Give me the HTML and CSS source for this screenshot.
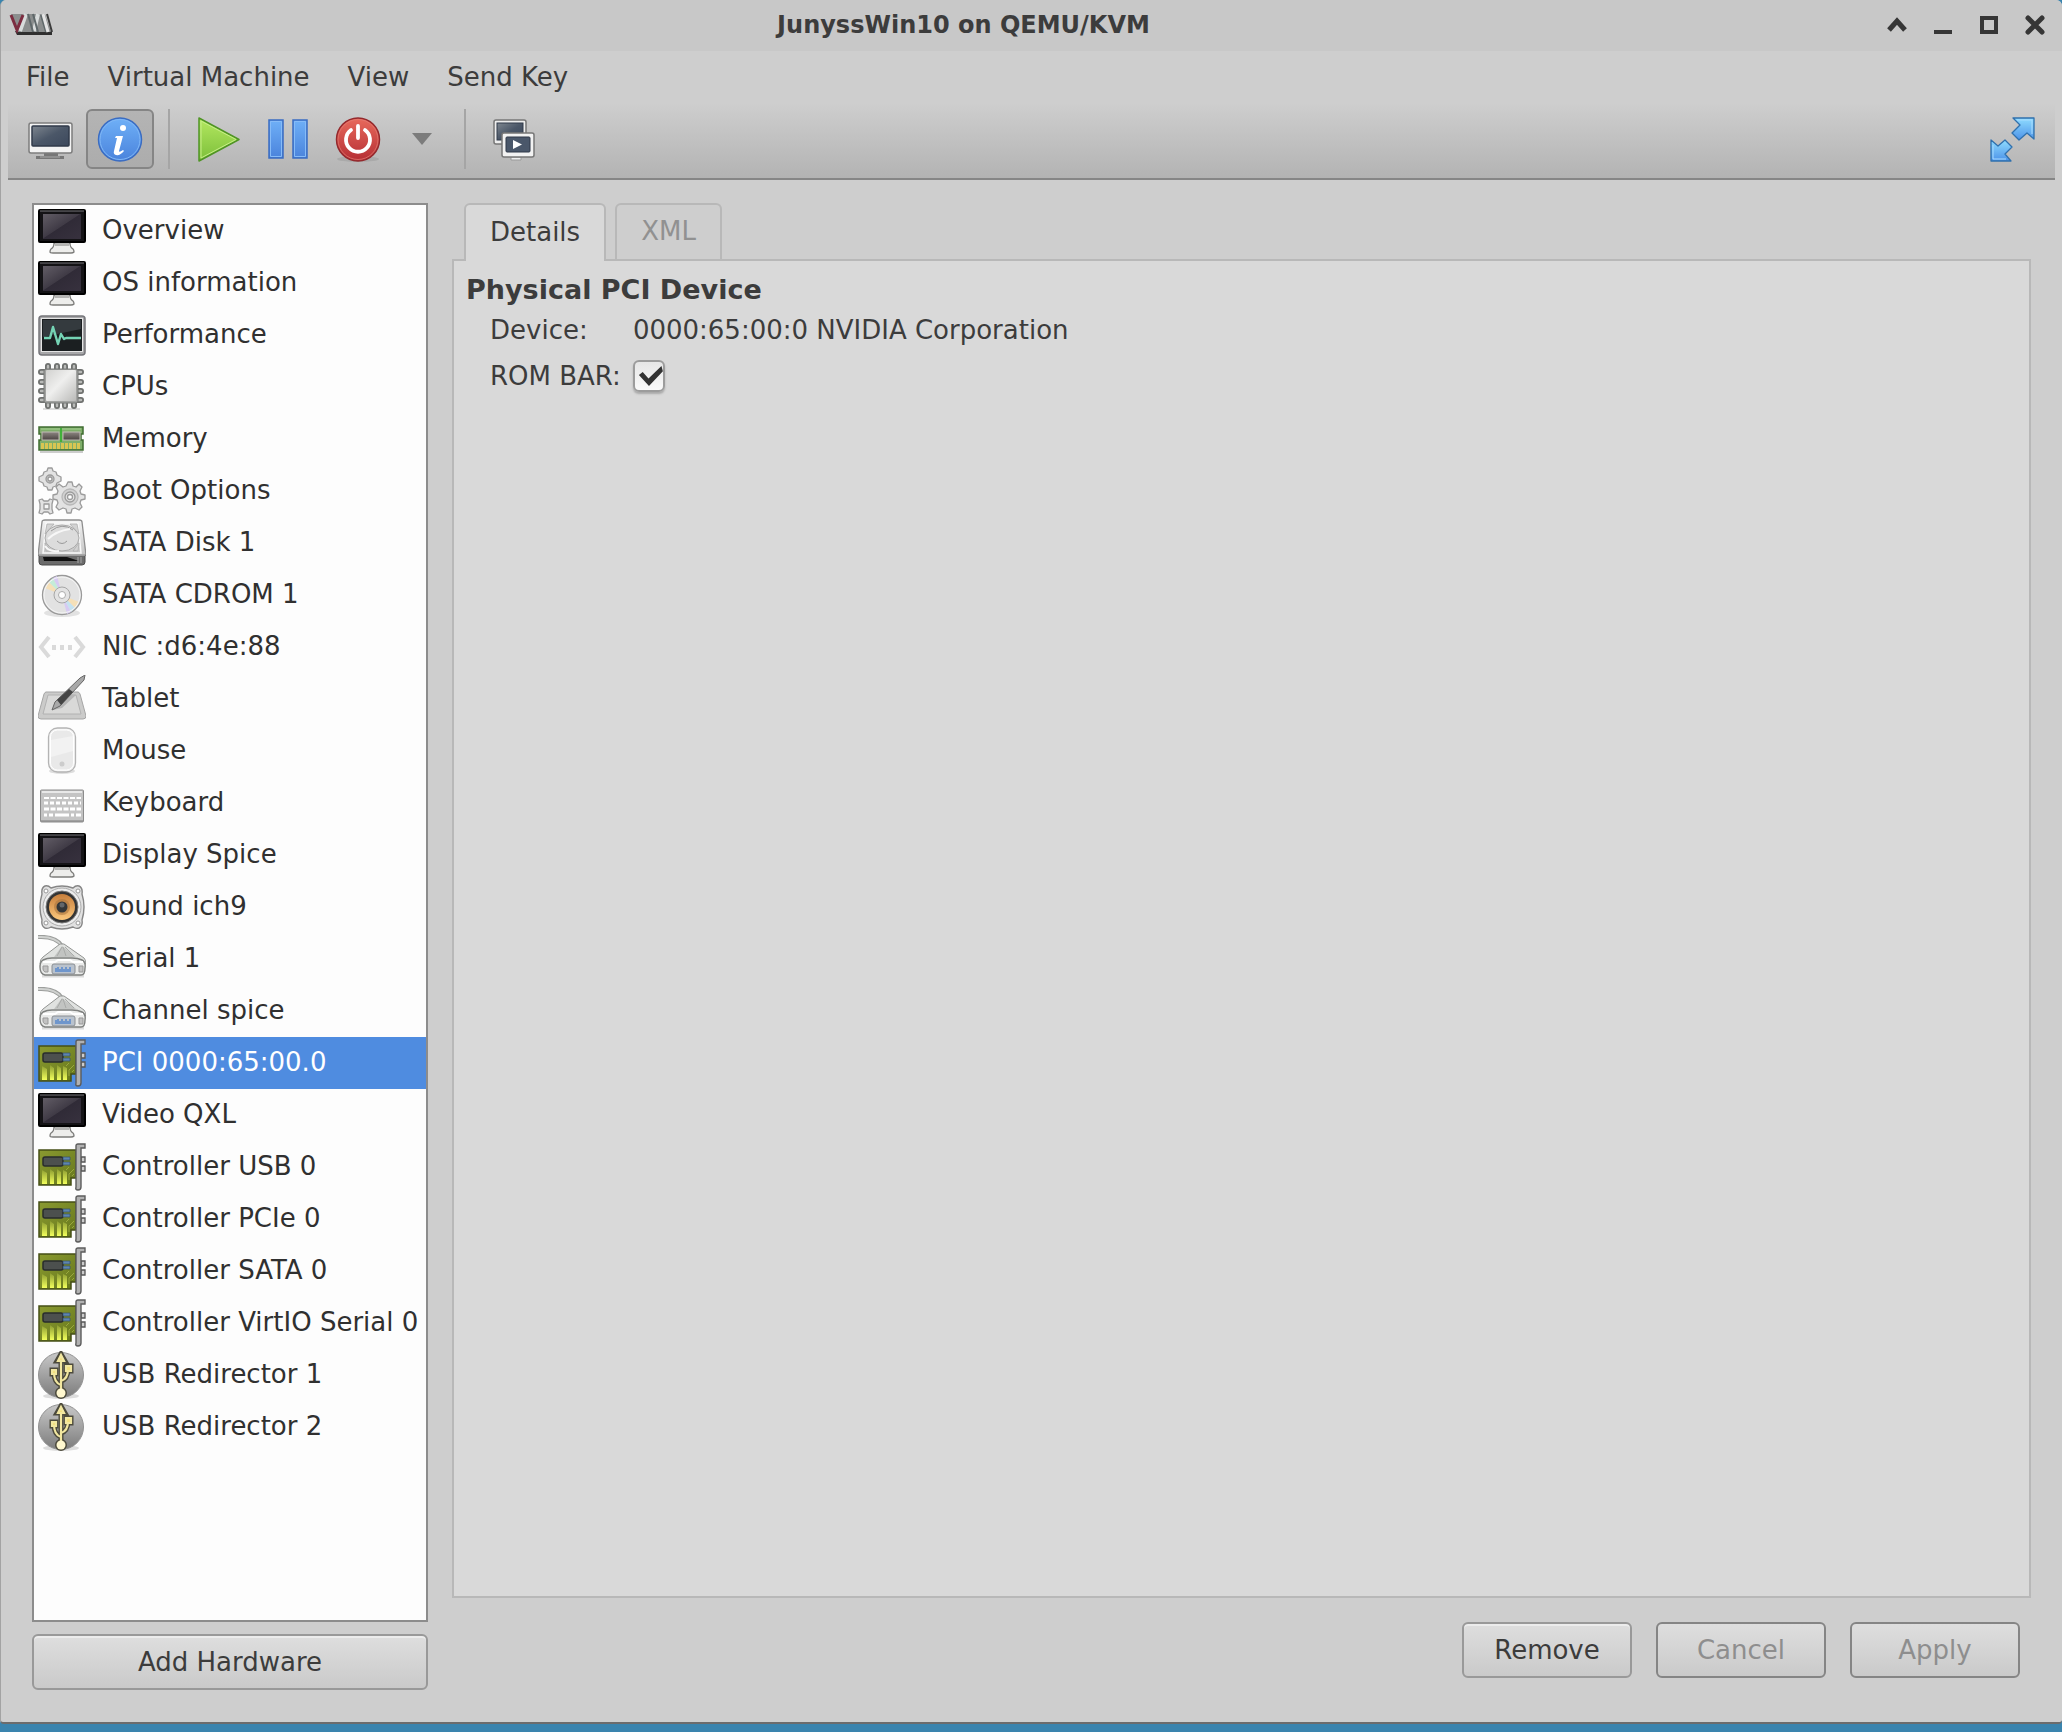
FILE: index.html
```html
<!DOCTYPE html>
<html lang="en">
<head>
    <meta charset="UTF-8">
    <title>JunyssWin10 on QEMU/KVM</title>
    <meta name="viewport" content="width=device-width, initial-scale=1.0">
    <link rel="stylesheet" href="styles.css">
</head>
<body>
    <!-- icon sprite -->
    <svg class="sprite" width="0" height="0" aria-hidden="true">
        <defs>
            <linearGradient id="g-screen" x1="0" y1="0" x2="1" y2="1">
                <stop offset="0" stop-color="#625d66"/><stop offset=".48" stop-color="#403b46"/>
                <stop offset=".5" stop-color="#302b37"/><stop offset="1" stop-color="#37313e"/>
            </linearGradient>
            <linearGradient id="g-navy" x1="0" y1="0" x2="1" y2="1">
                <stop offset="0" stop-color="#7e868f"/><stop offset=".5" stop-color="#4b5768"/><stop offset="1" stop-color="#3c485c"/>
            </linearGradient>
            <linearGradient id="g-metal" x1="0" y1="0" x2="0" y2="1">
                <stop offset="0" stop-color="#f4f4f4"/><stop offset="1" stop-color="#c4c4c4"/>
            </linearGradient>
            <linearGradient id="g-grey" x1="0" y1="0" x2="0" y2="1">
                <stop offset="0" stop-color="#c8c8c8"/><stop offset="1" stop-color="#7c7c7c"/>
            </linearGradient>
            <linearGradient id="g-chip" x1="0" y1="0" x2="1" y2="1">
                <stop offset="0" stop-color="#d2d2d0"/><stop offset=".45" stop-color="#efefee"/><stop offset="1" stop-color="#babab8"/>
            </linearGradient>
            <linearGradient id="g-ram" x1="0" y1="0" x2="0" y2="1">
                <stop offset="0" stop-color="#8d8782"/><stop offset="1" stop-color="#4a4341"/>
            </linearGradient>
            <linearGradient id="g-blue" x1="0" y1="0" x2="0" y2="1">
                <stop offset="0" stop-color="#6fb0f7"/><stop offset="1" stop-color="#4a83dc"/>
            </linearGradient>
            <linearGradient id="g-sky" x1="0" y1="0" x2="0" y2="1">
                <stop offset="0" stop-color="#8fdcff"/><stop offset="1" stop-color="#4c92e8"/>
            </linearGradient>
            <linearGradient id="g-green" x1="0" y1="0" x2="0" y2="1">
                <stop offset="0" stop-color="#b4e860"/><stop offset="1" stop-color="#7cbf3a"/>
            </linearGradient>
            <linearGradient id="g-red" x1="0" y1="0" x2="0" y2="1">
                <stop offset="0" stop-color="#e86a5c"/><stop offset="1" stop-color="#b52e34"/>
            </linearGradient>
            <linearGradient id="g-orange" x1="0" y1="0" x2="0" y2="1">
                <stop offset="0" stop-color="#c87f3c"/><stop offset="1" stop-color="#fbc77c"/>
            </linearGradient>
            <linearGradient id="g-board" x1="0" y1="0" x2="1" y2="1">
                <stop offset="0" stop-color="#8a9a30"/><stop offset="1" stop-color="#66771c"/>
            </linearGradient>
            <linearGradient id="g-pins" x1="0" y1="0" x2="0" y2="1">
                <stop offset="0" stop-color="#8a9a30"/><stop offset="1" stop-color="#f2ff5c"/>
            </linearGradient>
        </defs>

        <symbol id="monitor" viewBox="0 0 48 48">
            <path d="M16 36h16c0 4 1 5 3 6q1 1 1 3-1 1-3 1H15q-3 0-3-1 0-2 1-3c2-1 3-2 3-6z" fill="#ededeb" stroke="#7c7c7a" stroke-width="1.3"/>
            <path d="M17 36h14v3H17z" fill="#b5b5b3"/>
            <rect x="1" y="3" width="46" height="32" rx="1" fill="#141316" stroke="#000" stroke-width="2"/>
            <path d="M2 4h44" stroke="#77777a"/>
            <rect x="5" y="7" width="38" height="25" fill="url(#g-screen)"/>
        </symbol>
        <symbol id="performance" viewBox="0 0 48 48">
            <rect x="1" y="5" width="46" height="39" rx="3" fill="#a8a8aa" stroke="#75757a" stroke-width="1.5"/>
            <rect x="3" y="7" width="42" height="34" fill="#e4e4e4"/>
            <rect x="4" y="8" width="40" height="32" fill="#1b1f21"/>
            <path d="M5 9h38v9L5 26z" fill="#343a3e"/>
            <path d="M6 27h6l3-11 5 17 3-10 3 5 2-1h15" fill="none" stroke="#74d3b4" stroke-width="2.4" stroke-linejoin="round"/>
        </symbol>
        <symbol id="cpu" viewBox="0 0 48 48">
            <path d="M5 46h37" stroke="#ddd" stroke-width="2"/>
            <g stroke="#6f716f" stroke-width="6" stroke-linecap="round">
                <path d="M10 3v40M19 3v40M27 3v40M36 3v40M3 9h40M3 19h40M3 28h40M3 37h40"/>
            </g>
            <g stroke="#b9bab8" stroke-width="2.4" stroke-linecap="round">
                <path d="M10 3v40M19 3v40M27 3v40M36 3v40M3 9h40M3 19h40M3 28h40M3 37h40"/>
            </g>
            <rect x="6" y="6" width="34" height="34" rx="2" fill="#a2a3a1" stroke="#777876"/>
            <rect x="8" y="7" width="30" height="31" rx="1" fill="url(#g-chip)"/>
        </symbol>
        <symbol id="memory" viewBox="0 0 48 48">
            <path d="M2 37h43" stroke="#ccc" stroke-width="2"/>
            <path d="M1 12h44v7h-2v6h2v10H1V25h2v-6H1z" fill="#7fae6a" stroke="#3f6c30" stroke-width="1.5"/>
            <path d="M3 14h40" stroke="#a4cf90"/>
            <rect x="4" y="17" width="17" height="8" fill="url(#g-ram)" stroke="#beb9b2"/>
            <rect x="25" y="17" width="17" height="8" fill="url(#g-ram)" stroke="#beb9b2"/>
            <path d="M3 31h40" stroke="#d8c552" stroke-width="6" stroke-dasharray="3 1"/>
            <path d="M23 13v14" stroke="#42b03a" stroke-width="2"/>
        </symbol>
        <symbol id="gears" viewBox="0 0 48 48">
            <g fill="#e2e2e2" stroke="#9b9b9b" stroke-width="1.3" stroke-linejoin="round">
                <path d="M10 1h4l1 3 3 1 1 3 4 2v4l-4 2-1 3-3 1-1 3h-4l-1-3-3-1-1-3-4-2v-4l4-2 1-3 3-1z"/>
                <circle cx="12" cy="12" r="4" fill="#c8c8c8"/><circle cx="12" cy="12" r="2" fill="#fff"/>
                <path d="M30 15h4l1 4 3 1 3-3 3 3-2 4 1 3 4 1v4l-4 1-1 3 2 4-3 3-4-2-3 1-1 4h-4l-1-4-3-1-4 2-3-3 2-4-1-3-4-1v-4l4-1 1-3-2-4 3-3 4 3 3-1z"/>
                <circle cx="32" cy="30" r="8" fill="#d2d2d2" stroke="#b8b8b8"/><circle cx="32" cy="30" r="5"/><circle cx="32" cy="30" r="2.5" fill="#fff"/>
                <path d="M1 33l3-1 2 2h4l2-2 3 1-1 4v5l1 4-3 1-2-2H6l-2 2-3-1 1-4v-5z"/>
                <rect x="6" y="37" width="5" height="5" fill="#f6f6f6"/>
            </g>
        </symbol>
        <symbol id="disk" viewBox="0 0 48 48">
            <path d="M7 1h34q3 0 3 2l4 33H0L4 3q0-2 3-2z" fill="url(#g-metal)" stroke="#8e8e8e" stroke-width="1.3"/>
            <path d="M8 4h32l3 30H5z" fill="none" stroke="#f8f8f8" stroke-width="1.5"/>
            <path d="M9 5h7L7 15zM39 5h-7l9 10zM8 32l-1-8 6 8zM40 32l1-8-6 8z" fill="#d3d3d3" stroke="#aaa" stroke-width=".7"/>
            <ellipse cx="24" cy="19" rx="17" ry="13" fill="#dcdcdc" stroke="#aaa"/>
            <path d="M13 12q11-9 22-1M19 22q5 5 10 0" fill="none" stroke="#999"/>
            <path d="M10 20q8-8 22-10M7 27q4 6 14 5" fill="none" stroke="#f7f7f7" stroke-width="2"/>
            <path d="M1 36h46v7q0 3-3 3H4q-3 0-3-3z" fill="#6b6b6b" stroke="#4c4c4c"/>
            <path d="M5 38h24l12 4H6z" fill="#111"/><path d="M1 36h46" stroke="#ddd"/>
            <path d="M40 38v6M43 38v6" stroke="#a8a8a8"/>
        </symbol>
        <symbol id="cdrom" viewBox="0 0 48 48">
            <ellipse cx="24" cy="42" rx="18" ry="4" fill="#e2e2e2"/>
            <circle cx="24" cy="24" r="19.5" fill="#e2e2e2" stroke="#999" stroke-width="1.3"/>
            <path d="M24 24L7 17l4-6z" fill="#f5e0b8"/><path d="M24 24L11 11l4-4z" fill="#c4ecd8"/><path d="M24 24L15 7l4-2z" fill="#d6caf2"/>
            <path d="M24 24l17 7-4 6z" fill="#f5e0b8"/><path d="M24 24l13 13-4 4z" fill="#c4e2f0"/><path d="M24 24l9 17-4 2z" fill="#d6caf2"/>
            <circle cx="24" cy="24" r="18" fill="none" stroke="#f6f6f6"/>
            <circle cx="24" cy="24" r="8" fill="#e3e3e3" stroke="#a6a6a6"/>
            <circle cx="24" cy="24" r="3.5" fill="#fff" stroke="#acacac"/>
        </symbol>
        <symbol id="nic" viewBox="0 0 48 48">
            <path d="M11 14L3 24l8 10M37 14l8 10-8 10" fill="none" stroke="#dadada" stroke-width="4"/>
            <path d="M14 22h4v5h-4zM22 22h4v5h-4zM30 22h4v5h-4z" fill="#dadada"/>
        </symbol>
        <symbol id="tablet" viewBox="0 0 48 48">
            <path d="M8 17h32q1 0 2 2l6 22q0 3-3 3H3q-3 0-3-3l6-22q1-2 2-2z" fill="#cbcbca" stroke="#a5a5a5"/>
            <path d="M10 20h28l5 19H5z" fill="#d9d9d8" stroke="#b2b2b2"/>
            <path d="M15 35l9-2L38 20l-8-1z" fill="#b5b5b5"/>
            <path d="M14 35l3-8L42 3l5-3-1 5-24 26z" fill="#a9a9a9" stroke="#666"/>
            <path d="M19 25L31 14l4 3-12 13z" fill="#444"/>
        </symbol>
        <symbol id="mouse" viewBox="0 0 48 48">
            <ellipse cx="24" cy="44" rx="13" ry="3" fill="#ddd"/>
            <rect x="10.5" y="1" width="27" height="44" rx="9" fill="#f4f4f4" stroke="#b4b4b4" stroke-width="1.3"/>
            <rect x="12.5" y="3" width="23" height="40" rx="7" fill="#e9e9e9" stroke="#fff"/>
            <path d="M13 13l22-4v15L13 30z" fill="#f2f2f2"/>
            <circle cx="24" cy="37" r="2.5" fill="#ccc"/>
        </symbol>
        <symbol id="keyboard" viewBox="0 0 48 48">
            <rect x="2.5" y="11" width="43" height="32" rx="1" fill="#c4c4c4" stroke="#8c8c8c"/>
            <path d="M4 13h40" stroke="#e8e8e8" stroke-width="2"/>
            <path d="M6 19h37" stroke="#fff" stroke-width="2" stroke-dasharray="5 1.5"/>
            <path d="M6 24h37" stroke="#fff" stroke-width="3" stroke-dasharray="4 2"/>
            <path d="M6 30h37" stroke="#fff" stroke-width="3" stroke-dasharray="5 1.5"/>
            <path d="M6 36h3m2 0h4m2 0h14m2 0h3m2 0h5" stroke="#fff" stroke-width="3"/>
            <path d="M3 42h42" stroke="#7c7c7c"/>
        </symbol>
        <symbol id="sound" viewBox="0 0 48 48">
            <path d="M7 3q3-1 6 2 11-4 22 0 3-3 6-2 4 2 3 8 4 13 0 26 1 6-3 8-3 1-6-1-11 4-22 0-3 2-6 1-4-2-3-8-4-13 0-26-1-6 3-8z" fill="#e1e1e1" stroke="#868686" stroke-width="1.4"/>
            <g fill="#fff" stroke="#999"><circle cx="8" cy="8" r="2"/><circle cx="40" cy="8" r="2"/><circle cx="8" cy="40" r="2"/><circle cx="40" cy="40" r="2"/></g>
            <circle cx="24" cy="24" r="19" fill="#ededed" stroke="#aaa"/>
            <circle cx="24" cy="24" r="16" fill="#343434" stroke="#777"/>
            <circle cx="24" cy="24" r="13" fill="url(#g-orange)"/>
            <circle cx="24" cy="24" r="8" fill="#a87440" opacity=".6"/>
            <circle cx="24" cy="24" r="5.5" fill="#343638"/><circle cx="24" cy="22" r="2.5" fill="#62666a"/>
        </symbol>
        <symbol id="serial" viewBox="0 0 48 48">
            <path d="M4 41h42" stroke="#dcdcdc" stroke-width="3"/>
            <path d="M0 2q18-1 24 9" fill="none" stroke="#9c9e9c" stroke-width="4"/>
            <path d="M0 2q18-1 24 9" fill="none" stroke="#d0d2d0" stroke-width="2"/>
            <path d="M22 9h4l20 14q2 2 2 6H2q0-5 3-7z" fill="#e0e2e0" stroke="#939593"/>
            <path d="M24 11l-8 11h22z" fill="#c2c4c2"/>
            <path d="M24 12l-5 9M25 12l3 9M27 12l9 9" stroke="#a9aba9"/>
            <path d="M5 25q4-2 9-2h20q6 0 10 2 4 2 3 8 0 7-4 7H7q-5-1-5-8 0-5 3-7z" fill="#e9eae9" stroke="#7f817f" stroke-width="1.4"/>
            <path d="M5 27h12l3-2h12l3 2h10" fill="none" stroke="#fff" stroke-width="2"/>
            <rect x="14" y="29" width="23" height="10" rx="2" fill="#b9c2cd" stroke="#8a8e92"/>
            <path d="M17 37v-4h2v-1h2v2h2v-2h2v2h2v-2h2v2h2v-2h2v5z" fill="#6f96cc"/>
            <path d="M5 31h5v6H7q-2-1-2-3zM41 31h4v6h-4z" fill="#c2c2c2" stroke="#999"/>
        </symbol>
        <symbol id="pci" viewBox="0 0 48 48">
            <path d="M1 7h37v28h-5v7H1z" fill="url(#g-board)" stroke="#454f16" stroke-width="1.5"/>
            <path d="M36 26l-5 5v6M36 31l-2 2M28 27l3-3" fill="none" stroke="#9aa83e"/>
            <path d="M4 27l5 3v11H4zM12 26l4 3v12h-4zM19 26l4 3v12h-4zM25 27l4 2v12h-4z" fill="url(#g-pins)"/>
            <rect x="5" y="14" width="20" height="9" rx="2" fill="#4c504e" stroke="#292c2d" stroke-width="1.5"/>
            <path d="M25 14h7v3h-7zM25 19h7v3h-7z" fill="#5e86ae" stroke="#344f70" stroke-width=".7"/>
            <path d="M43 14h4v5h-4zM43 23h4v5h-4z" fill="#ccc" stroke="#555" stroke-width="1.3"/>
            <path d="M38 3q0-2 2-2h7v4h-4v39q0 3-3 3t-2-3z" fill="#b1b1b1" stroke="#5c5c5c" stroke-width="1.4"/>
        </symbol>
        <symbol id="usb" viewBox="0 0 48 48">
            <ellipse cx="23" cy="45" rx="18" ry="3" fill="#ddd"/>
            <circle cx="23" cy="24" r="22.5" fill="url(#g-grey)" stroke="#919191"/>
            <g fill="none" stroke="#4c4a3c" stroke-width="5">
                <path d="M23 10v30M23 34q-7-2-7-13M23 30q7-2 7-12"/>
                <path d="M23 3l4 7h-8zM14 19h4v4h-4zM28 15h5v5h-5z"/><circle cx="23" cy="42" r="3.5"/>
            </g>
            <g fill="none" stroke="#f2e7a0" stroke-width="2.2">
                <path d="M23 10v30M23 34q-7-2-7-13M23 30q7-2 7-12"/>
                <path d="M23 4l3 6h-6zM14 19h4v4h-4zM28 15h5v5h-5z" fill="#f2df7c"/>
            </g>
            <circle cx="23" cy="42" r="4.5" fill="#fff8cf"/>
        </symbol>

        <symbol id="console" viewBox="0 0 48 48">
            <path d="M18 38h14v3h6v3H10v-3h8z" fill="#777"/>
            <rect x="3" y="8" width="43" height="30" rx="2" fill="#f3f3f3" stroke="#7d7d7d" stroke-width="1.5"/>
            <rect x="6" y="11" width="37" height="20" rx="1" fill="url(#g-navy)" stroke="#303a4a" stroke-width="1.5"/>
            <path d="M14 42h20" stroke="#aaa"/>
        </symbol>
        <symbol id="info" viewBox="0 0 48 48">
            <circle cx="24" cy="24.5" r="21.5" fill="url(#g-blue)" stroke="#3a6cc2" stroke-width="1.5"/>
            <circle cx="24" cy="24.5" r="20" fill="none" stroke="#80b7f5"/>
            <circle cx="27" cy="13" r="3" fill="#fff"/>
            <path d="M20 21h7l-4 15q0 2 4-1l1 1q-4 5-8 4-3-1-2-4l3-13h-2z" fill="#fff"/>
        </symbol>
        <symbol id="play" viewBox="0 0 48 48">
            <path d="M5 3l40 21.5L5 46z" fill="url(#g-green)" stroke="#4f9424" stroke-width="1.5" stroke-linejoin="round"/>
            <path d="M7 6l35 18.5L7 43z" fill="none" stroke="#c6ee86"/>
        </symbol>
        <symbol id="pause" viewBox="0 0 48 48">
            <g fill="url(#g-blue)" stroke="#3a6cc2" stroke-width="1.5">
                <rect x="5" y="5" width="14" height="38"/><rect x="29" y="5" width="14" height="38"/>
            </g>
            <path d="M6.500 6.500h11v35h-11zM30.500 6.500h11v35h-11z" fill="none" stroke="#86bbf7"/>
        </symbol>
        <symbol id="power" viewBox="0 0 48 48">
            <ellipse cx="24" cy="44" rx="21" ry="3" fill="#999" opacity=".5"/>
            <circle cx="24" cy="24.5" r="21.5" fill="url(#g-red)" stroke="#94282c" stroke-width="1.5"/>
            <circle cx="24" cy="24.5" r="20" fill="none" stroke="#e47d74" opacity=".7"/>
            <path d="M17 15a12 12 0 1 0 14 0M24 11v12" fill="none" stroke="#fff" stroke-width="3.8" stroke-linecap="round"/>
        </symbol>
        <symbol id="snapshots" viewBox="0 0 48 48">
            <rect x="4" y="5" width="32" height="24" rx="2" fill="#eee" stroke="#777" stroke-width="1.5"/>
            <rect x="7" y="8" width="26" height="17" fill="url(#g-navy)" stroke="#303a4a"/>
            <path d="M21 42h10v3H21z" fill="#eee" stroke="#999"/>
            <rect x="12" y="18" width="32" height="24" rx="2" fill="#f2f2f2" stroke="#777" stroke-width="1.5"/>
            <rect x="16" y="22" width="24" height="15" rx="1" fill="#4a576a" stroke="#2f3949"/>
            <path d="M23 25l9 4.500-9 4.500z" fill="#fff"/>
        </symbol>
        <symbol id="fullscreen" viewBox="0 0 48 48">
            <g fill="url(#g-sky)" stroke="#2f70ad" stroke-width="1.3" stroke-linejoin="round">
                <path d="M24 3h21v21l-7-6-8 7-7-7 8-8z"/>
                <path d="M2 46V25l7 6 7-6 7 7-7 7 6 7z"/>
            </g>
            <path d="M28 5h15v14M4 30v14h13" fill="none" stroke="#a8dcff"/>
        </symbol>
    </svg>

    <div class="window">
        <header class="titlebar">
            <svg class="app-icon" viewBox="0 0 44 24" aria-hidden="true">
                <path d="M6 18h37v4H8z" fill="#2f2f2f"/>
                <path d="M2 1h34l6 18H8z" fill="#8b8e8e"/>
                <path d="M17 1l-6 17M29 1l-4 17" stroke="#d8dcdc" stroke-width="4"/>
                <path d="M19 1l5 18M32 2l5 17M24 1l5 18" stroke="#5f686a" stroke-width="2"/>
                <path d="M34 1l5 18" stroke="#e4e4e4" stroke-width="3"/>
                <path d="M38 1l5 18" stroke="#3c3c3c" stroke-width="2"/>
                <path d="M2 2l6 15 6-15" fill="none" stroke="#7c2c40" stroke-width="3"/>
            </svg>
            <h1 class="window-title">JunyssWin10 on QEMU/KVM</h1>
            <div class="window-controls">
                <button type="button" aria-label="Shade"><svg viewBox="0 0 20 20"><path d="M2 15l8-9 8 9" stroke-width="5"/></svg></button>
                <button type="button" aria-label="Minimize"><svg viewBox="0 0 20 20"><path d="M1 17h18" stroke-width="4"/></svg></button>
                <button type="button" aria-label="Maximize"><svg viewBox="0 0 20 20"><path d="M3 3h14v14H3z" stroke-width="4"/></svg></button>
                <button type="button" aria-label="Close"><svg viewBox="0 0 20 20"><path d="M3 3l14 14M17 3L3 17" stroke-width="5" stroke-linecap="round"/></svg></button>
            </div>
        </header>

        <nav class="menubar">
            <button type="button">File</button>
            <button type="button">Virtual Machine</button>
            <button type="button">View</button>
            <button type="button">Send Key</button>
        </nav>

        <div class="toolbar">
            <button type="button" class="tool" aria-label="Console"><svg class="icon"><use href="#console"/></svg></button>
            <button type="button" class="tool active" aria-label="Details" aria-pressed="true"><svg class="icon"><use href="#info"/></svg></button>
            <span class="separator"></span>
            <button type="button" class="tool" aria-label="Run"><svg class="icon"><use href="#play"/></svg></button>
            <button type="button" class="tool" aria-label="Pause"><svg class="icon"><use href="#pause"/></svg></button>
            <button type="button" class="tool" aria-label="Shut down"><svg class="icon"><use href="#power"/></svg></button>
            <button type="button" class="tool tool-menu" aria-label="Shut down options"><svg viewBox="0 0 20 12" width="20" height="12"><path d="M0 0h20L10 12z" fill="#7c7c7c"/></svg></button>
            <span class="separator"></span>
            <button type="button" class="tool" aria-label="Snapshots"><svg class="icon"><use href="#snapshots"/></svg></button>
            <button type="button" class="tool tool-end" aria-label="Fullscreen"><svg class="icon"><use href="#fullscreen"/></svg></button>
        </div>

        <div class="content">
            <aside class="sidebar">
                <ul class="hw-list">
                    <li><a href="#"><svg class="icon"><use href="#monitor"/></svg><span>Overview</span></a></li>
                    <li><a href="#"><svg class="icon"><use href="#monitor"/></svg><span>OS information</span></a></li>
                    <li><a href="#"><svg class="icon"><use href="#performance"/></svg><span>Performance</span></a></li>
                    <li><a href="#"><svg class="icon"><use href="#cpu"/></svg><span>CPUs</span></a></li>
                    <li><a href="#"><svg class="icon"><use href="#memory"/></svg><span>Memory</span></a></li>
                    <li><a href="#"><svg class="icon"><use href="#gears"/></svg><span>Boot Options</span></a></li>
                    <li><a href="#"><svg class="icon"><use href="#disk"/></svg><span>SATA Disk 1</span></a></li>
                    <li><a href="#"><svg class="icon"><use href="#cdrom"/></svg><span>SATA CDROM 1</span></a></li>
                    <li><a href="#"><svg class="icon"><use href="#nic"/></svg><span>NIC :d6:4e:88</span></a></li>
                    <li><a href="#"><svg class="icon"><use href="#tablet"/></svg><span>Tablet</span></a></li>
                    <li><a href="#"><svg class="icon"><use href="#mouse"/></svg><span>Mouse</span></a></li>
                    <li><a href="#"><svg class="icon"><use href="#keyboard"/></svg><span>Keyboard</span></a></li>
                    <li><a href="#"><svg class="icon"><use href="#monitor"/></svg><span>Display Spice</span></a></li>
                    <li><a href="#"><svg class="icon"><use href="#sound"/></svg><span>Sound ich9</span></a></li>
                    <li><a href="#"><svg class="icon"><use href="#serial"/></svg><span>Serial 1</span></a></li>
                    <li><a href="#"><svg class="icon"><use href="#serial"/></svg><span>Channel spice</span></a></li>
                    <li><a href="#" class="selected" aria-current="true"><svg class="icon"><use href="#pci"/></svg><span>PCI 0000:65:00.0</span></a></li>
                    <li><a href="#"><svg class="icon"><use href="#monitor"/></svg><span>Video QXL</span></a></li>
                    <li><a href="#"><svg class="icon"><use href="#pci"/></svg><span>Controller USB 0</span></a></li>
                    <li><a href="#"><svg class="icon"><use href="#pci"/></svg><span>Controller PCIe 0</span></a></li>
                    <li><a href="#"><svg class="icon"><use href="#pci"/></svg><span>Controller SATA 0</span></a></li>
                    <li><a href="#"><svg class="icon"><use href="#pci"/></svg><span>Controller VirtIO Serial 0</span></a></li>
                    <li><a href="#"><svg class="icon"><use href="#usb"/></svg><span>USB Redirector 1</span></a></li>
                    <li><a href="#"><svg class="icon"><use href="#usb"/></svg><span>USB Redirector 2</span></a></li>
                </ul>
                <button type="button" class="btn">Add Hardware</button>
            </aside>

            <main class="details">
                <div class="tabs" role="tablist">
                    <button type="button" class="tab current" role="tab" aria-selected="true">Details</button>
                    <button type="button" class="tab" role="tab" aria-selected="false" disabled>XML</button>
                </div>
                <section class="panel" role="tabpanel">
                    <h2>Physical PCI Device</h2>
                    <div class="fields">
                        <span>Device:</span>
                        <span>0000:65:00:0 NVIDIA Corporation</span>
                        <label for="rom-bar">ROM BAR:</label>
                        <input type="checkbox" id="rom-bar" class="check" checked>
                    </div>
                </section>
                <div class="actions">
                    <button type="button" class="btn">Remove</button>
                    <button type="button" class="btn" disabled>Cancel</button>
                    <button type="button" class="btn" disabled>Apply</button>
                </div>
            </main>
        </div>
    </div>
</body>
</html>
```

FILE: styles.css
```css
* {
    box-sizing: border-box;
}
body {
    margin: 0;
    background: #3a84ae;
    font-family: 'DejaVu Sans', sans-serif;
    font-size: 26px;
    line-height: 34px;
    color: #3c3c3c;
}
button {
    font: inherit;
    color: inherit;
    border: 0;
    margin: 0;
    padding: 0;
    background: none;
}
.sprite {
    position: absolute;
}
.icon {
    width: 48px;
    height: 48px;
    flex: none;
}
.window {
    display: flex;
    flex-direction: column;
    min-height: calc(100vh - 8px);
    background: #cecece;
    border-left: 1px solid #a3a3a3;
    border-bottom: 2px solid #6c6c6c;
    border-radius: 6px 6px 4px 4px;
    overflow: hidden;
}

/* title bar */
.titlebar {
    display: flex;
    align-items: center;
    height: 51px;
    padding: 0 4px 2px 8px;
    background: #c8c8c8;
}
.app-icon {
    width: 44px;
    height: 24px;
}
.window-title {
    flex: 1;
    margin: 0;
    text-align: center;
    font-size: 24px;
    font-weight: 700;
}
.window-controls {
    display: flex;
}
.window-controls button {
    width: 46px;
    height: 48px;
    display: flex;
    align-items: center;
    justify-content: center;
}
.window-controls svg {
    width: 20px;
    height: 20px;
    fill: none;
    stroke: #363636;
}

/* menu bar */
.menubar {
    display: flex;
    height: 52px;
    padding: 0 6px;
}
.menubar button {
    padding: 0 19px;
}

/* toolbar */
.toolbar {
    display: flex;
    align-items: center;
    gap: 2px;
    height: 77px;
    margin: 0 7px;
    padding: 0 8px 3px;
    background: linear-gradient(#cecece, #b3b3b3);
    border-bottom: 2px solid #868686;
}
.tool {
    display: flex;
    align-items: center;
    justify-content: center;
    width: 68px;
    height: 60px;
    border: 2px solid transparent;
    border-radius: 6px;
}
.tool.active {
    background: linear-gradient(#b4b4b4, #acacac);
    border-color: #858585;
}
.tool-menu {
    width: 56px;
}
.tool-end {
    margin-left: auto;
}
.separator {
    width: 2px;
    height: 60px;
    margin: 0 12px;
    background: #a5a5a5;
}

/* main area */
.content {
    flex: 1;
    display: flex;
    gap: 24px;
    padding: 23px 31px 32px;
}
.sidebar {
    display: flex;
    flex-direction: column;
    gap: 12px;
    flex: none;
    width: 396px;
}
.hw-list {
    flex: 1;
    list-style: none;
    margin: 0;
    padding: 0;
    background: #fdfdfd;
    border: 2px solid #8c8c8c;
}
.hw-list a {
    display: flex;
    align-items: center;
    gap: 16px;
    height: 52px;
    padding-left: 4px;
    color: #303030;
    text-decoration: none;
    white-space: nowrap;
}
.hw-list span {
    padding-bottom: 2px;
}
.hw-list a.selected {
    background: #4f8ce0;
    color: #fff;
}
.btn {
    height: 56px;
    min-width: 170px;
    background: linear-gradient(#dedede, #cacaca);
    border: 2px solid #999;
    border-radius: 6px;
    box-shadow: inset 0 2px #ececec;
}
.btn:disabled {
    color: #8e8e8e;
    border-color: #858585;
    box-shadow: none;
}

.details {
    flex: 1;
    display: flex;
    flex-direction: column;
}
.tabs {
    display: flex;
    align-items: flex-end;
    gap: 9px;
    padding-left: 12px;
}
.tab {
    height: 56px;
    padding: 0 24px 2px;
    border: 2px solid #b8b8b8;
    border-bottom: 0;
    border-radius: 6px 6px 0 0;
}
.tab:disabled {
    color: #919191;
}
.tab.current {
    height: 58px;
    margin-bottom: -2px;
    background: #d9d9d9;
    z-index: 1;
}
.panel {
    flex: 1;
    padding: 12px;
    background: #d9d9d9;
    border: 2px solid #b8b8b8;
}
.panel h2 {
    margin: 0 0 6px;
    font-size: 27px;
    font-weight: 700;
}
.fields {
    display: grid;
    grid-template-columns: auto 1fr;
    align-items: center;
    gap: 12px;
    margin-left: 24px;
}
.check {
    appearance: none;
    width: 32px;
    height: 32px;
    margin: 0;
    border: 2px solid #9c9c9c;
    border-radius: 6px;
    background: linear-gradient(#e6e6e6, #fafafa);
    box-shadow: 0 2px 2px #aaa;
}
.check:checked::before {
    content: "";
    display: block;
    width: 24px;
    height: 20px;
    margin: 4px 0 0 4px;
    background: #333;
    clip-path: polygon(0 45%, 16% 30%, 40% 62%, 94% 0, 100% 26%, 42% 100%);
}
.actions {
    display: flex;
    justify-content: flex-end;
    gap: 24px;
    padding: 24px 11px 12px 0;
}
```
